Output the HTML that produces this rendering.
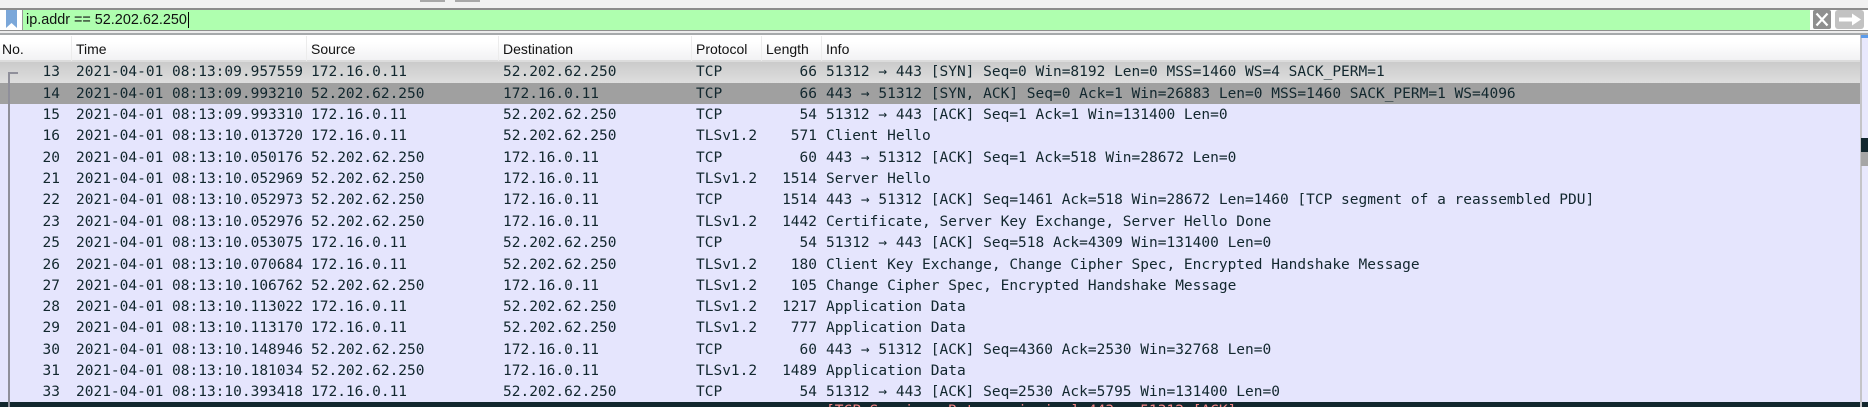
<!DOCTYPE html>
<html><head><meta charset="utf-8"><style>
html,body{margin:0;padding:0;width:1868px;height:407px;overflow:hidden;background:#f0f0f0}
#w{position:relative;width:1868px;height:407px;overflow:hidden;filter:blur(.35px);font-family:"DejaVu Sans Mono","Liberation Mono",monospace}
.a{position:absolute}
.r{position:absolute;left:0;width:1860px;height:21px;color:#12272e;font-size:14.5px;line-height:21px;white-space:pre}
.r span{position:absolute;top:0}
.n{right:1800px;text-align:right}
.t{left:76px}.s{left:311px}.d{left:503px}.p{left:696px}
.l{left:740px;width:77px;text-align:right}
.i{left:826px}
.h{position:absolute;top:39px;font:14px/20px "Liberation Sans",sans-serif;color:#111}
.sep{position:absolute;top:36px;width:1px;height:25px;background:#ececec}
</style></head><body><div id="w">
<div class="a" style="left:0;top:0;width:1868px;height:8px;background:#f1f1f1"></div>
<div class="a" style="left:420px;top:0;width:25px;height:2px;background:#a8a8a8"></div>
<div class="a" style="left:455px;top:0;width:25px;height:2px;background:#a8a8a8"></div>
<div class="a" style="left:0;top:8px;width:1868px;height:2px;background:#8c8c8c"></div>
<div class="a" style="left:0;top:10px;width:1868px;height:20px;background:#fff"></div>
<div class="a" style="left:23px;top:10px;width:1787px;height:20px;background:#afffaf"></div>
<div class="a" style="left:0;top:30px;width:1868px;height:1px;background:#8f8f8f"></div>
<div class="a" style="left:22px;top:10px;width:1px;height:20px;background:#9a9a9a"></div>
<svg class="a" style="left:5px;top:10px" width="13" height="19"><path d="M1 0H12V18L6.500 13L1 18Z" fill="#7ba7d9"/></svg>
<div class="a" style="left:26px;top:10px;font:14.4px/20px 'Liberation Sans',sans-serif;color:#111;white-space:pre">ip.addr == 52.202.62.250</div>
<div class="a" style="left:188px;top:12px;width:1px;height:16px;background:#000"></div>
<svg class="a" style="left:1813px;top:10px" width="18" height="19"><rect width="18" height="19" rx="2" fill="#8f8f8f"/><path d="M3.500 3.500L14.500 15.500M14.500 3.500L3.500 15.500" stroke="#fff" stroke-width="2.200"/></svg>
<svg class="a" style="left:1835px;top:10px" width="29" height="19"><rect width="29" height="19" rx="3" fill="#c2c2c2"/><path d="M4 7.500H17V3.500L26 9.500L17 15.500V11.500H4Z" fill="#fff"/></svg>
<div class="a" style="left:0;top:31px;width:1868px;height:2px;background:#ececec"></div>
<div class="a" style="left:0;top:33px;width:1868px;height:2px;background:#a6a9ab"></div>
<div class="a" style="left:0;top:35px;width:1860px;height:26px;background:linear-gradient(#fff 0,#fff 25%,#f1f1f3 100%)"></div>
<div class="a" style="left:0;top:60px;width:1860px;height:2px;background:#dcdcdc"></div>
<div class="sep" style="left:71px"></div><div class="sep" style="left:306px"></div><div class="sep" style="left:498px"></div><div class="sep" style="left:691px"></div><div class="sep" style="left:761px"></div><div class="sep" style="left:821px"></div>
<div class="h" style="left:2px">No.</div><div class="h" style="left:76px">Time</div><div class="h" style="left:311px">Source</div><div class="h" style="left:503px">Destination</div><div class="h" style="left:696px">Protocol</div><div class="h" style="left:766px">Length</div><div class="h" style="left:826px">Info</div>

<div class="a" style="left:0;top:62px;width:1860px;height:340px;background:#e5e5fd"></div>
<div class="a" style="left:0;top:62px;width:1860px;height:21px;background:linear-gradient(#cbcbcb,#dedede)"></div>
<div class="a" style="left:0;top:83px;width:1860px;height:21px;background:#a0a0a0"></div>

<div class="r" style="top:62px"><span class="n">13</span><span class="t">2021-04-01 08:13:09.957559</span><span class="s">172.16.0.11</span><span class="d">52.202.62.250</span><span class="p">TCP</span><span class="l">66</span><span class="i">51312 → 443 [SYN] Seq=0 Win=8192 Len=0 MSS=1460 WS=4 SACK_PERM=1</span></div>
<div class="r" style="top:84px"><span class="n">14</span><span class="t">2021-04-01 08:13:09.993210</span><span class="s">52.202.62.250</span><span class="d">172.16.0.11</span><span class="p">TCP</span><span class="l">66</span><span class="i">443 → 51312 [SYN, ACK] Seq=0 Ack=1 Win=26883 Len=0 MSS=1460 SACK_PERM=1 WS=4096</span></div>
<div class="r" style="top:105px"><span class="n">15</span><span class="t">2021-04-01 08:13:09.993310</span><span class="s">172.16.0.11</span><span class="d">52.202.62.250</span><span class="p">TCP</span><span class="l">54</span><span class="i">51312 → 443 [ACK] Seq=1 Ack=1 Win=131400 Len=0</span></div>
<div class="r" style="top:126px"><span class="n">16</span><span class="t">2021-04-01 08:13:10.013720</span><span class="s">172.16.0.11</span><span class="d">52.202.62.250</span><span class="p">TLSv1.2</span><span class="l">571</span><span class="i">Client Hello</span></div>
<div class="r" style="top:148px"><span class="n">20</span><span class="t">2021-04-01 08:13:10.050176</span><span class="s">52.202.62.250</span><span class="d">172.16.0.11</span><span class="p">TCP</span><span class="l">60</span><span class="i">443 → 51312 [ACK] Seq=1 Ack=518 Win=28672 Len=0</span></div>
<div class="r" style="top:169px"><span class="n">21</span><span class="t">2021-04-01 08:13:10.052969</span><span class="s">52.202.62.250</span><span class="d">172.16.0.11</span><span class="p">TLSv1.2</span><span class="l">1514</span><span class="i">Server Hello</span></div>
<div class="r" style="top:190px"><span class="n">22</span><span class="t">2021-04-01 08:13:10.052973</span><span class="s">52.202.62.250</span><span class="d">172.16.0.11</span><span class="p">TCP</span><span class="l">1514</span><span class="i">443 → 51312 [ACK] Seq=1461 Ack=518 Win=28672 Len=1460 [TCP segment of a reassembled PDU]</span></div>
<div class="r" style="top:212px"><span class="n">23</span><span class="t">2021-04-01 08:13:10.052976</span><span class="s">52.202.62.250</span><span class="d">172.16.0.11</span><span class="p">TLSv1.2</span><span class="l">1442</span><span class="i">Certificate, Server Key Exchange, Server Hello Done</span></div>
<div class="r" style="top:233px"><span class="n">25</span><span class="t">2021-04-01 08:13:10.053075</span><span class="s">172.16.0.11</span><span class="d">52.202.62.250</span><span class="p">TCP</span><span class="l">54</span><span class="i">51312 → 443 [ACK] Seq=518 Ack=4309 Win=131400 Len=0</span></div>
<div class="r" style="top:255px"><span class="n">26</span><span class="t">2021-04-01 08:13:10.070684</span><span class="s">172.16.0.11</span><span class="d">52.202.62.250</span><span class="p">TLSv1.2</span><span class="l">180</span><span class="i">Client Key Exchange, Change Cipher Spec, Encrypted Handshake Message</span></div>
<div class="r" style="top:276px"><span class="n">27</span><span class="t">2021-04-01 08:13:10.106762</span><span class="s">52.202.62.250</span><span class="d">172.16.0.11</span><span class="p">TLSv1.2</span><span class="l">105</span><span class="i">Change Cipher Spec, Encrypted Handshake Message</span></div>
<div class="r" style="top:297px"><span class="n">28</span><span class="t">2021-04-01 08:13:10.113022</span><span class="s">172.16.0.11</span><span class="d">52.202.62.250</span><span class="p">TLSv1.2</span><span class="l">1217</span><span class="i">Application Data</span></div>
<div class="r" style="top:318px"><span class="n">29</span><span class="t">2021-04-01 08:13:10.113170</span><span class="s">172.16.0.11</span><span class="d">52.202.62.250</span><span class="p">TLSv1.2</span><span class="l">777</span><span class="i">Application Data</span></div>
<div class="r" style="top:340px"><span class="n">30</span><span class="t">2021-04-01 08:13:10.148946</span><span class="s">52.202.62.250</span><span class="d">172.16.0.11</span><span class="p">TCP</span><span class="l">60</span><span class="i">443 → 51312 [ACK] Seq=4360 Ack=2530 Win=32768 Len=0</span></div>
<div class="r" style="top:361px"><span class="n">31</span><span class="t">2021-04-01 08:13:10.181034</span><span class="s">52.202.62.250</span><span class="d">172.16.0.11</span><span class="p">TLSv1.2</span><span class="l">1489</span><span class="i">Application Data</span></div>
<div class="r" style="top:382px"><span class="n">33</span><span class="t">2021-04-01 08:13:10.393418</span><span class="s">172.16.0.11</span><span class="d">52.202.62.250</span><span class="p">TCP</span><span class="l">54</span><span class="i">51312 → 443 [ACK] Seq=2530 Ack=5795 Win=131400 Len=0</span></div>
<div class="a" style="left:0;top:402px;width:1860px;height:5px;background:#12272e;overflow:hidden;color:#f78787;font-size:14.5px;line-height:21px;white-space:pre"><span class="a" style="left:826px;top:-1px">[TCP Spurious Retransmission] 443 → 51312 [ACK]</span></div>

<div class="a" style="left:8px;top:72px;width:10px;height:1.500px;background:#8f8f9a"></div>
<div class="a" style="left:8px;top:72px;width:1.500px;height:335px;background:#8f8f9a"></div>

<div class="a" style="left:1860px;top:35px;width:8px;height:372px;background:#e8e8fd"></div>
<div class="a" style="left:1860px;top:35px;width:2px;height:372px;background:#c4c4c8"></div>
<div class="a" style="left:1861px;top:35px;width:7px;height:3px;background:#5b9bea"></div>
<div class="a" style="left:1861px;top:138px;width:7px;height:14px;background:#12272e"></div>
<div class="a" style="left:1861px;top:152px;width:7px;height:14px;background:#a6a6a6"></div>
<div class="a" style="left:1862px;top:402px;width:6px;height:5px;background:#12272e"></div>
</div></body></html>
